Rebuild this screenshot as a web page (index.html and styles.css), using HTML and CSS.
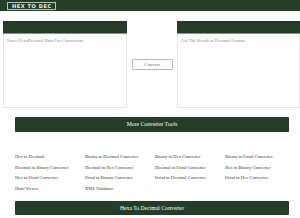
FILE: index.html
```html
<!DOCTYPE html>
<html lang="en">
<head>
    <meta charset="UTF-8">
    <meta name="viewport" content="width=device-width, initial-scale=1.0">
    <title>Hex To Decimal Converter</title>
    <link rel="stylesheet" href="styles.css">
</head>
<body>
    <div class="top-bar">
        <span class="logo">HEX TO DEC</span>
    </div>

    <div class="converter">
        <div class="panel">
            <div class="panel-head"></div>
            <textarea class="panel-box" placeholder="Enter HexaDecimal Data For Conversion"></textarea>
        </div>
        <div class="action">
            <button class="convert-btn">Convert</button>
        </div>
        <div class="panel panel-right">
            <div class="panel-head"></div>
            <textarea class="panel-box" placeholder="Get The Result in Decimal Format" readonly></textarea>
        </div>
    </div>

    <div class="bar">More Converter Tools</div>

    <div class="tools">
        <a href="#">Hex to Decimal</a>
        <a href="#">Binary to Decimal Converter</a>
        <a href="#">Binary to Hex Converter</a>
        <a href="#">Binary to Octal Converter</a>
        <a href="#">Decimal to Binary Converter</a>
        <a href="#">Decimal to Hex Converter</a>
        <a href="#">Decimal to Octal Converter</a>
        <a href="#">Hex to Binary Converter</a>
        <a href="#">Hex to Octal Converter</a>
        <a href="#">Octal to Binary Converter</a>
        <a href="#">Octal to Decimal Converter</a>
        <a href="#">Octal to Hex Converter</a>
        <a href="#">Html Viewer</a>
        <a href="#">XML Validator</a>
    </div>

    <div class="bar bar-bottom">Hexa To Decimal Converter</div>
</body>
</html>
```

FILE: styles.css
```css
body {
    font-family: "Liberation Serif", "Times New Roman", serif;
    margin: 0;
    padding: 0;
    width: 300px;
    overflow: hidden;
    background-color: #fff;
}
.top-bar {
    background-color: #233d28;
    height: 11px;
    display: flex;
    align-items: center;
    padding-left: 7px;
}
.logo {
    display: block;
    height: 8px;
    box-sizing: border-box;
    border: 1px solid #b9c2ba;
    padding: 0 3px 0 4px;
    color: #f2f2f2;
    font-family: "DejaVu Sans", sans-serif;
    font-weight: bold;
    font-size: 5px;
    line-height: 6px;
    letter-spacing: 0.6px;
}
.converter {
    display: flex;
    margin-top: 10px;
    padding-left: 3px;
}
.panel {
    width: 124px;
    display: flex;
    flex-direction: column;
}
.panel-right {
    width: 123px;
}
.panel-head {
    height: 12px;
    background-color: #233d28;
    border-bottom: 1px solid #7f9a83;
}
.panel-box {
    height: 74px;
    box-sizing: border-box;
    border: 1px solid #e6e6e6;
    border-top: none;
    padding: 4px 3px;
    margin: 0;
    font-family: "Liberation Serif", serif;
    font-size: 4.6px;
    resize: none;
    outline: none;
}
.panel-box::placeholder {
    color: #8a8a8a;
}
.action {
    width: 50px;
    display: flex;
    align-items: center;
    justify-content: center;
}
.convert-btn {
    width: 41px;
    height: 11px;
    padding: 0;
    background-color: #fff;
    border: 1px solid #b8b8b8;
    border-radius: 1px;
    color: #666;
    font-family: "Liberation Serif", serif;
    font-size: 4.8px;
    margin-top: -1px;
    cursor: pointer;
}
.bar {
    margin: 9px 11px 0 15px;
    height: 15px;
    background-color: #233d28;
    border-radius: 1px;
    box-shadow: 0 0 1px rgba(0, 0, 0, 0.25);
    color: #fff;
    font-size: 5.7px;
    line-height: 15px;
    text-align: center;
}
.tools {
    display: grid;
    grid-template-columns: 70px 70px 70px 70px;
    margin: 20px 0 0 15px;
}
.tools a {
    color: #333;
    text-decoration: none;
    font-size: 4.6px;
    line-height: 10.5px;
    white-space: nowrap;
}
.bar-bottom {
    margin-top: 7px;
    height: 14px;
    line-height: 14px;
}
```
